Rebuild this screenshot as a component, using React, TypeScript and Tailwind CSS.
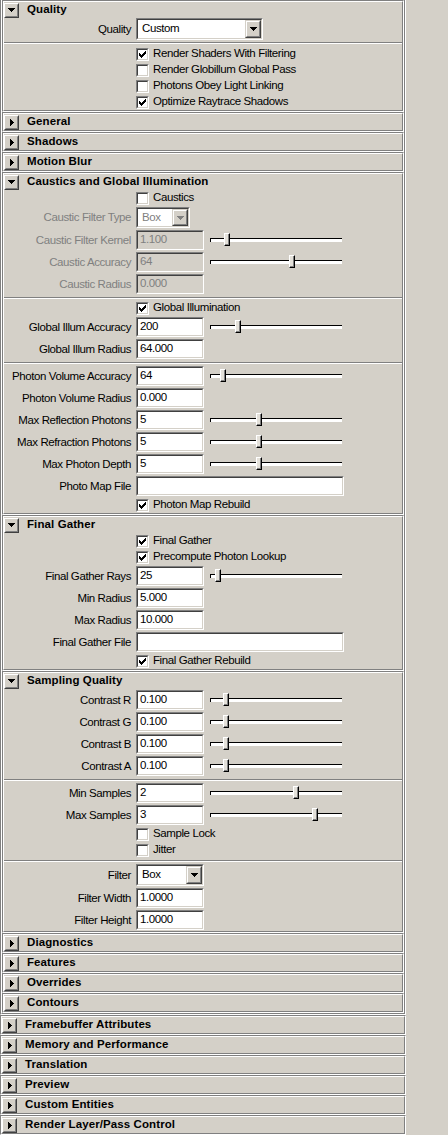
import React from 'react';

function Etched({ children }: { children: React.ReactNode }) {
  return (
    <div className="border border-t-[#808080] border-l-[#808080] border-r-white border-b-white">
      <div className="border border-t-white border-l-white border-r-[#808080] border-b-[#808080]">
        {children}
      </div>
    </div>
  );
}

function DownArrow({ color = '#000' }: { color?: string }) {
  return (
    <svg width="7" height="4" viewBox="0 0 7 4" shapeRendering="crispEdges">
      <path d="M0 0h7v1H6v1H5v1H4v1H3V3H2V2H1V1H0z" fill={color} />
    </svg>
  );
}

function RightArrow() {
  return (
    <svg width="4" height="7" viewBox="0 0 4 7" shapeRendering="crispEdges">
      <path d="M0 0h1v1h1v1h1v1h1v1H3v1H2v1H1v1H0z" fill="#000" />
    </svg>
  );
}

function Toggle({ open }: { open: boolean }) {
  return (
    <div className="w-[15px] h-[15px] flex shrink-0 border border-t-white border-l-white border-r-[#404040] border-b-[#404040]">
      <div className="flex-1 flex items-center justify-center border border-t-[#d4d0c8] border-l-[#d4d0c8] border-r-[#808080] border-b-[#808080]">
        {open ? <DownArrow /> : <RightArrow />}
      </div>
    </div>
  );
}

function Header({ title, open }: { title: string; open?: boolean }) {
  return (
    <div className="h-[16px] flex items-center">
      <Toggle open={!!open} />
      <span className="ml-[8px] text-[11.5px] font-bold tracking-[0.1px] leading-none text-black">{title}</span>
    </div>
  );
}

function Collapsed({ title }: { title: string }) {
  return (
    <Etched>
      <Header title={title} />
    </Etched>
  );
}

function Label({ children, disabled }: { children: React.ReactNode; disabled?: boolean }) {
  return (
    <div className={`w-[132px] shrink-0 pr-[5px] text-right leading-[13px] ${disabled ? 'text-[#808080]' : 'text-black'}`}>
      {children}
    </div>
  );
}

function Field({ value, wide, disabled }: { value: string; wide?: boolean; disabled?: boolean }) {
  return (
    <div className={`${wide ? 'w-[208px]' : 'w-[68px]'} h-[20px] flex shrink-0 border border-t-[#808080] border-l-[#808080] border-r-white border-b-white`}>
      <div
        className={`flex-1 flex items-center pl-[2px] leading-none border border-t-[#404040] border-l-[#404040] border-r-[#d4d0c8] border-b-[#d4d0c8] ${
          disabled ? 'bg-[#d4d0c8] text-[#808080]' : 'bg-white text-black'
        }`}
      >
        {value}
      </div>
    </div>
  );
}

function Slider({ pos }: { pos: number }) {
  return (
    <div className="relative w-[132px] h-[14px] ml-[6px] shrink-0">
      <div className="absolute left-0 right-0 top-[5px] h-[4px] bg-white border-t border-l border-t-black border-l-black" />
      <div
        className="absolute top-0 w-[6px] h-[13px] flex border border-t-white border-l-white border-r-black border-b-black"
        style={{ left: pos }}
      >
        <div className="flex-1 bg-[#e4e1da] border-r border-b border-r-[#808080] border-b-[#808080]" />
      </div>
    </div>
  );
}

function Check({ checked }: { checked?: boolean }) {
  return (
    <div className="w-[13px] h-[13px] flex shrink-0 border border-t-[#808080] border-l-[#808080] border-r-white border-b-white">
      <div className="flex-1 flex items-center justify-center bg-white border border-t-[#404040] border-l-[#404040] border-r-[#d4d0c8] border-b-[#d4d0c8]">
        {checked && (
          <svg width="7" height="7" viewBox="0 0 7 7" shapeRendering="crispEdges">
            <rect x="6" y="0" width="1" height="1" fill="#000" />
            <rect x="5" y="1" width="2" height="1" fill="#000" />
            <rect x="0" y="2" width="1" height="1" fill="#000" />
            <rect x="4" y="2" width="3" height="1" fill="#000" />
            <rect x="0" y="3" width="2" height="1" fill="#000" />
            <rect x="3" y="3" width="3" height="1" fill="#000" />
            <rect x="0" y="4" width="5" height="1" fill="#000" />
            <rect x="1" y="5" width="3" height="1" fill="#000" />
            <rect x="2" y="6" width="1" height="1" fill="#000" />
          </svg>
        )}
      </div>
    </div>
  );
}

function CheckRow({ label, checked }: { label: string; checked?: boolean }) {
  return (
    <div className="h-[16px] flex items-center pl-[132px]">
      <Check checked={checked} />
      <span className="ml-[4px] leading-none text-black">{label}</span>
    </div>
  );
}

function Dropdown({ value, className, disabled }: { value: string; className: string; disabled?: boolean }) {
  return (
    <div className={`${className} flex shrink-0 border border-t-[#808080] border-l-[#808080] border-r-white border-b-white`}>
      <div className="flex-1 flex items-stretch bg-white border border-t-[#404040] border-l-[#404040] border-r-[#d4d0c8] border-b-[#d4d0c8]">
        <span className={`flex-1 flex items-center pl-[4px] leading-none ${disabled ? 'text-[#808080]' : 'text-black'}`}>
          {value}
        </span>
        <div className="w-[16px] flex border border-t-[#d4d0c8] border-l-[#d4d0c8] border-r-[#404040] border-b-[#404040]">
          <div className="flex-1 flex items-center justify-center bg-[#d4d0c8] border border-t-white border-l-white border-r-[#808080] border-b-[#808080]">
            <DownArrow color={disabled ? '#808080' : '#000'} />
          </div>
        </div>
      </div>
    </div>
  );
}

function Sep({ extra }: { extra?: boolean }) {
  return (
    <div className={extra ? 'pt-[2px] pb-[2px]' : 'pt-[2px] pb-[1px]'}>
      <div className="h-[2px] border-t border-b border-t-[#808080] border-b-white" />
    </div>
  );
}

function FieldRow({
  label,
  value,
  slider,
  wide,
  disabled,
}: {
  label: string;
  value: string;
  slider?: number;
  wide?: boolean;
  disabled?: boolean;
}) {
  return (
    <div className="h-[22px] flex items-center">
      <Label disabled={disabled}>{label}</Label>
      <Field value={value} wide={wide} disabled={disabled} />
      {slider !== undefined && <Slider pos={slider} />}
    </div>
  );
}

export default function App() {
  return (
    <div className="min-h-screen w-full bg-[#d4d0c8] font-['Liberation_Sans',Arial,sans-serif] text-[11.5px] tracking-[-0.4px] text-black">
      <div className="w-[406px]">
        <div className="border-l border-r border-b border-l-[#808080] border-r-white border-b-white">
          <div className="border-l border-r border-b border-l-white border-r-[#808080] border-b-[#808080]">
            <Etched>
              <Header title="Quality" open />
              <div className="h-[22px] flex items-center">
                <Label>Quality</Label>
                <Dropdown value="Custom" className="w-[127px] h-[22px]" />
              </div>
              <Sep extra />
              <CheckRow label="Render Shaders With Filtering" checked />
              <CheckRow label="Render Globillum Global Pass" />
              <CheckRow label="Photons Obey Light Linking" />
              <CheckRow label="Optimize Raytrace Shadows" checked />
            </Etched>
            <Collapsed title="General" />
            <Collapsed title="Shadows" />
            <Collapsed title="Motion Blur" />
            <Etched>
              <Header title="Caustics and Global Illumination" open />
              <CheckRow label="Caustics" />
              <div className="h-[23px] flex items-center">
                <Label disabled>Caustic Filter Type</Label>
                <Dropdown value="Box" className="w-[54px] h-[21px]" disabled />
              </div>
              <FieldRow label="Caustic Filter Kernel" value="1.100" slider={14} disabled />
              <FieldRow label="Caustic Accuracy" value="64" slider={79} disabled />
              <FieldRow label="Caustic Radius" value="0.000" disabled />
              <Sep />
              <CheckRow label="Global Illumination" checked />
              <FieldRow label="Global Illum Accuracy" value="200" slider={25} />
              <FieldRow label="Global Illum Radius" value="64.000" />
              <Sep />
              <FieldRow label="Photon Volume Accuracy" value="64" slider={10} />
              <FieldRow label="Photon Volume Radius" value="0.000" />
              <FieldRow label="Max Reflection Photons" value="5" slider={46} />
              <FieldRow label="Max Refraction Photons" value="5" slider={46} />
              <FieldRow label="Max Photon Depth" value="5" slider={46} />
              <FieldRow label="Photo Map File" value="" wide />
              <CheckRow label="Photon Map Rebuild" checked />
            </Etched>
            <Etched>
              <Header title="Final Gather" open />
              <CheckRow label="Final Gather" checked />
              <CheckRow label="Precompute Photon Lookup" checked />
              <FieldRow label="Final Gather Rays" value="25" slider={5} />
              <FieldRow label="Min Radius" value="5.000" />
              <FieldRow label="Max Radius" value="10.000" />
              <FieldRow label="Final Gather File" value="" wide />
              <CheckRow label="Final Gather Rebuild" checked />
            </Etched>
            <Etched>
              <Header title="Sampling Quality" open />
              <FieldRow label="Contrast R" value="0.100" slider={13} />
              <FieldRow label="Contrast G" value="0.100" slider={13} />
              <FieldRow label="Contrast B" value="0.100" slider={13} />
              <FieldRow label="Contrast A" value="0.100" slider={13} />
              <Sep />
              <FieldRow label="Min Samples" value="2" slider={83} />
              <FieldRow label="Max Samples" value="3" slider={102} />
              <CheckRow label="Sample Lock" />
              <CheckRow label="Jitter" />
              <Sep />
              <div className="h-[24px] flex items-center">
                <Label>Filter</Label>
                <Dropdown value="Box" className="w-[68px] h-[22px]" />
              </div>
              <FieldRow label="Filter Width" value="1.0000" />
              <FieldRow label="Filter Height" value="1.0000" />
            </Etched>
            <Collapsed title="Diagnostics" />
            <Collapsed title="Features" />
            <Collapsed title="Overrides" />
            <Collapsed title="Contours" />
          </div>
        </div>
        <Collapsed title="Framebuffer Attributes" />
        <Collapsed title="Memory and Performance" />
        <Collapsed title="Translation" />
        <Collapsed title="Preview" />
        <Collapsed title="Custom Entities" />
        <Collapsed title="Render Layer/Pass Control" />
      </div>
    </div>
  );
}
